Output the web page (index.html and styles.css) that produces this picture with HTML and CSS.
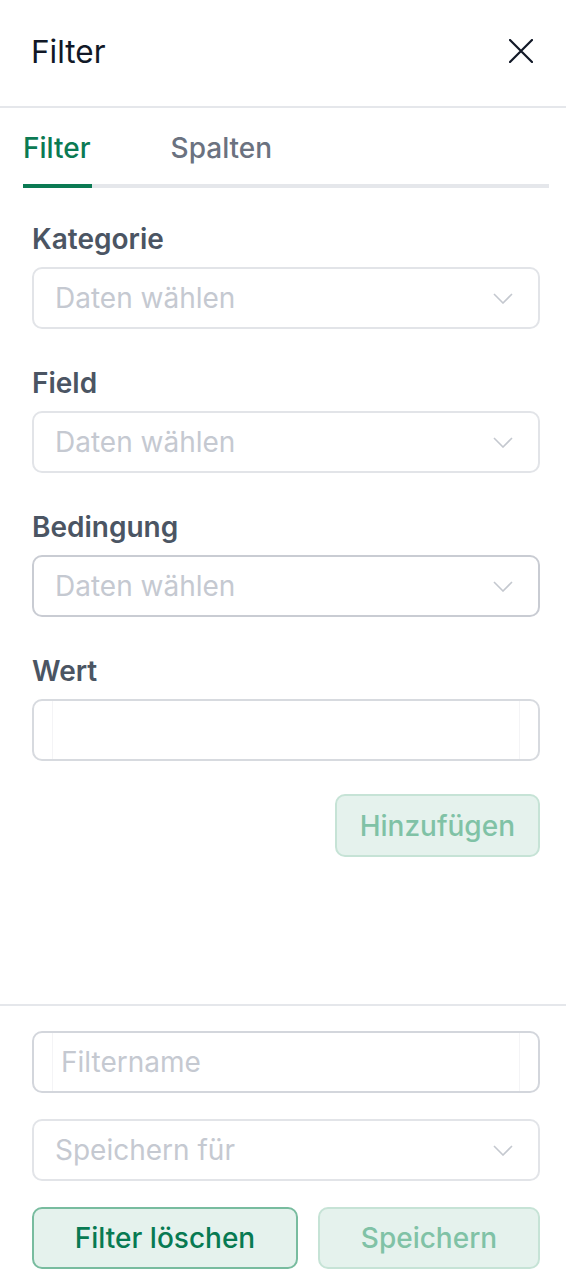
FILE: index.html
```html
<!DOCTYPE html>
<html lang="de">
<head>
<meta charset="utf-8">
<title>Filter</title>
<link rel="stylesheet" href="styles.css">
</head>
<body>
<div class="panel">
  <div class="main">
    <header class="header">
      <h1 class="title">Filter</h1>
      <button class="close" aria-label="Schließen">
        <svg width="24" height="24" viewBox="0 0 24 24"><path d="M1 1L23 23M23 1L1 23" stroke="#111827" stroke-width="2.2" fill="none" stroke-linecap="round"/></svg>
      </button>
    </header>
    <nav class="tabs">
      <span class="tab active">Filter</span>
      <span class="tab">Spalten</span>
    </nav>
    <div class="form">
      <div class="group">
        <label class="label">Kategorie</label>
        <div class="select"><span class="ph">Daten wählen</span><svg class="chev" width="20" height="11" viewBox="0 0 20 11"><path d="M1 1L10 10L19 1" stroke="#c4c8cf" stroke-width="1.6" fill="none"/></svg></div>
      </div>
      <div class="group">
        <label class="label">Field</label>
        <div class="select"><span class="ph">Daten wählen</span><svg class="chev" width="20" height="11" viewBox="0 0 20 11"><path d="M1 1L10 10L19 1" stroke="#c4c8cf" stroke-width="1.6" fill="none"/></svg></div>
      </div>
      <div class="group">
        <label class="label">Bedingung</label>
        <div class="select hover"><span class="ph">Daten wählen</span><svg class="chev" width="20" height="11" viewBox="0 0 20 11"><path d="M1 1L10 10L19 1" stroke="#c4c8cf" stroke-width="1.6" fill="none"/></svg></div>
      </div>
      <div class="group">
        <label class="label">Wert</label>
        <div class="textbox"><span class="inner"></span></div>
      </div>
      <div class="actions">
        <button class="btn disabled add">Hinzufügen</button>
      </div>
    </div>
  </div>
  <footer class="footer">
    <div class="textbox"><span class="inner ph">Filtername</span></div>
    <div class="select"><span class="ph">Speichern für</span><svg class="chev" width="20" height="11" viewBox="0 0 20 11"><path d="M1 1L10 10L19 1" stroke="#c4c8cf" stroke-width="1.6" fill="none"/></svg></div>
    <div class="buttons">
      <button class="btn primary">Filter löschen</button>
      <button class="btn disabled">Speichern</button>
    </div>
  </footer>
</div>
</body>
</html>
```

FILE: styles.css
```css
* { box-sizing: border-box; }
html, body { margin: 0; padding: 0; background: #fff; }
body { font-family: Inter, "Noto Sans", sans-serif; }

.panel {
  width: 566px;
  height: 1282px;
  display: flex;
  flex-direction: column;
}
.main { flex: 1; }

.header {
  height: 108px;
  border-bottom: 2px solid #e5e7eb;
  display: flex;
  align-items: center;
  justify-content: space-between;
  padding: 0 33px 4px 31px;
}
.title {
  margin: 0;
  font-size: 31.5px;
  font-weight: 400;
  color: #111827;
  line-height: normal;
}
.close {
  border: 0;
  background: none;
  padding: 0;
  width: 24px;
  height: 24px;
  display: flex;
}

.tabs {
  margin: 19px 17px 0 23px;
  border-bottom: 4px solid #e5e7eb;
  display: flex;
  gap: 79px;
}
.tab {
  font-size: 28px;
  font-weight: 500;
  line-height: 42px;
  color: #6b7280;
  padding: 0 1px 15px 0;
}
.tab.active {
  color: #0b7a53;
  border-bottom: 4px solid #0b7a53;
  margin-bottom: -4px;
}

.form {
  margin-top: 30px;
  padding: 0 26px 0 32px;
  display: flex;
  flex-direction: column;
  gap: 33px;
}
.group { display: flex; flex-direction: column; }
.label {
  font-size: 28px;
  font-weight: 600;
  line-height: 42px;
  color: #4b5563;
  margin-bottom: 7px;
}

.select, .textbox {
  height: 62px;
  border: 2px solid #e2e4e8;
  border-radius: 10px;
  display: flex;
  align-items: center;
  font-size: 28px;
  line-height: 42px;
}
.select {
  padding: 0 25px 0 21px;
  justify-content: space-between;
}
.select.hover { border-color: #c9ccd3; }
.ph { color: #c5c9d1; }
.chev { display: block; }

.textbox {
  padding: 0 18px;
  border-color: #d7dadf;
}
.textbox .inner {
  flex: 1;
  align-self: stretch;
  border-left: 1px solid #f4f4f6;
  border-right: 1px solid #f4f4f6;
  padding-left: 8px;
  display: flex;
  align-items: center;
}

.actions {
  display: flex;
  justify-content: flex-end;
  margin-top: 0;
}

.btn {
  font-family: Inter, "Noto Sans", sans-serif;
  font-size: 28px;
  font-weight: 500;
  line-height: 42px;
  height: 63px;
  padding: 0 26px;
  border-radius: 10px;
  background: #e5f2ed;
  border: 2px solid #c6e3d6;
  color: #80c2a6;
}
.btn.add { padding: 0 23px; }
.btn.primary {
  border-color: #78bc9f;
  color: #077a52;
}

.footer {
  border-top: 2px solid #e5e7eb;
  padding: 25px 26px 13px 32px;
  display: flex;
  flex-direction: column;
  gap: 26px;
}
.footer .textbox { border-color: #d3d6dc; }
.buttons {
  display: flex;
  gap: 20px;
}
.buttons .btn {
  flex: 1 1 auto;
  height: 62px;
}
```
